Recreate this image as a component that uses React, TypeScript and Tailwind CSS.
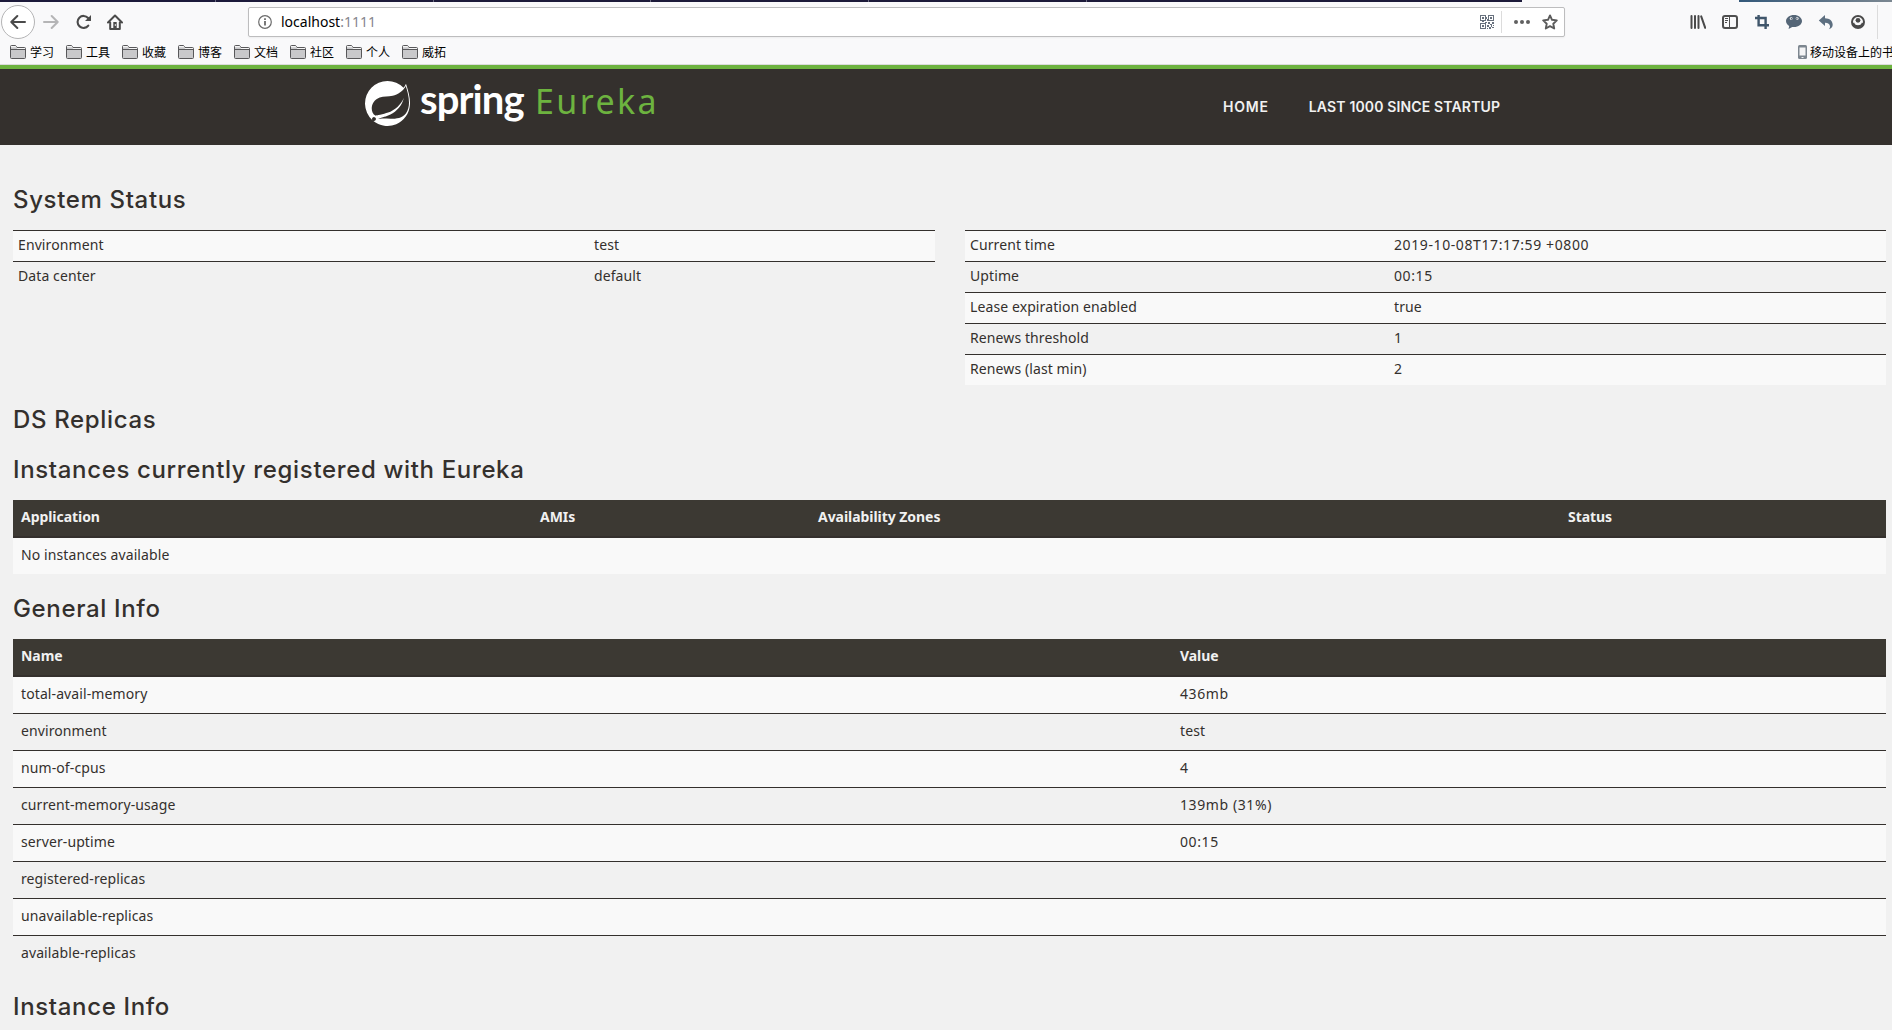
import React from 'react';
import { SiSpring } from 'react-icons/si';

const bookmarks = ['学习', '工具', '收藏', '博客', '文档', '社区', '个人', '威拓'];

const environmentRows = [
  { name: 'Environment', value: 'test' },
  { name: 'Data center', value: 'default' },
];

const runtimeRows = [
  { name: 'Current time', value: '2019-10-08T17:17:59 +0800' },
  { name: 'Uptime', value: '00:15' },
  { name: 'Lease expiration enabled', value: 'true' },
  { name: 'Renews threshold', value: '1' },
  { name: 'Renews (last min)', value: '2' },
];

const generalInfo = [
  { name: 'total-avail-memory', value: '436mb' },
  { name: 'environment', value: 'test' },
  { name: 'num-of-cpus', value: '4' },
  { name: 'current-memory-usage', value: '139mb (31%)' },
  { name: 'server-uptime', value: '00:15' },
  { name: 'registered-replicas', value: '' },
  { name: 'unavailable-replicas', value: '' },
  { name: 'available-replicas', value: '' },
];

const BackIcon = () => (
  <svg className="size-4" viewBox="0 0 16 16" fill="none" stroke="#4a4a4a" strokeWidth="2" strokeLinecap="round" strokeLinejoin="round">
    <path d="M15 8H1.5M7.3 2 1.3 8l6 6" />
  </svg>
);

const ForwardIcon = () => (
  <svg className="size-4" viewBox="0 0 16 16" fill="none" stroke="#b5b5b6" strokeWidth="2" strokeLinecap="round" strokeLinejoin="round">
    <path d="M1 8h13.5M8.7 2l6 6-6 6" />
  </svg>
);

const ReloadIcon = () => (
  <svg className="size-4" viewBox="0 0 16 16" fill="none" stroke="#4a4a4a" strokeWidth="2.1" strokeLinecap="round">
    <path d="M12.3 11.6A6 6 0 1 1 12.1 4" />
    <path d="M15 1v5.4a.6.6 0 0 1-.6.6H9z" fill="#4a4a4a" stroke="none" />
  </svg>
);

const HomeIcon = () => (
  <svg className="size-4" viewBox="0 0 16 16" fill="none" stroke="#4a4a4a" strokeWidth="2" strokeLinecap="round" strokeLinejoin="round">
    <path d="M1 8.5 8 1.5l7 7M3.2 8.5V15h9.6V8.5" />
    <path d="M6.3 8h3.4v6H6.3z" fill="#4a4a4a" stroke="none" />
    <path d="M8.3 10.5v1" stroke="#f9f9fa" strokeWidth="1" />
  </svg>
);

const InfoIcon = () => (
  <svg className="size-[14px]" viewBox="0 0 14 14" fill="none" stroke="#6b6b6b">
    <circle cx="7" cy="7" r="6.3" strokeWidth="1.2" />
    <path d="M7 6v4.5M7 3.2v1.7" strokeWidth="1.8" />
  </svg>
);

const QrIcon = () => (
  <svg className="size-[14px]" viewBox="0 0 14 14" fill="#68717e">
    <path fillRule="evenodd" d="M0 0h6v6H0zM1 1v4h4V1zM8 0h6v6H8zM9 1v4h4V1zM0 8h6v6H0zM1 9v4h4V9z" />
    <path d="M2 2h2v2H2zM10 2h2v2h-2zM2 10h2v2H2zM6 2h1v2H6zM7 4h1v2H7zM2 6h2v1H2zM5 7h2v1H5zM8 7h2v2H8zM10 9h2v1h-2zM12 7h2v2h-2zM7 10h2v2H7zM9 12h2v2H9zM11 10h1v2h-1zM12 12h2v1h-2zM7 13h1v1H7zM13 10h1v1h-1z" />
  </svg>
);

const StarIcon = () => (
  <svg className="size-4" viewBox="0 0 16 16" fill="none" stroke="#5b5b5b" strokeWidth="1.9" strokeLinejoin="round">
    <path d="m8 1.4 2 4.4 4.8.6-3.5 3.3.9 4.8L8 12.2l-4.2 2.3.9-4.8L1.2 6.4 6 5.8z" />
  </svg>
);

const LibraryIcon = () => (
  <svg className="size-4" viewBox="0 0 16 16" fill="none" stroke="#4a4a4a" strokeWidth="2" strokeLinecap="round">
    <path d="M1.5 2v12M5 2v12M8.5 2v12M11.200 2.400l4 11.400" />
  </svg>
);

const SidebarIcon = () => (
  <svg className="size-4" viewBox="0 0 16 16" fill="none" stroke="#4f4f4f">
    <rect x="1" y="2" width="14" height="12" rx="2" strokeWidth="2" />
    <path d="M7.5 2v12M3 4.5h3M3 6.5h3M3 8.5h2" strokeWidth="1" />
  </svg>
);

const CropIcon = () => (
  <svg className="size-4" viewBox="0 0 16 16" fill="none" stroke="#40566b" strokeWidth="2.400">
    <path d="M1 4h10.600v11M4.600 1v10.200H15" />
  </svg>
);

const ChatIcon = () => (
  <svg className="size-4" viewBox="0 0 16 16">
    <path d="M8 1C3.6 1 0 3.6 0 7.1c0 2.1 1.3 3.8 3.2 4.8L2.6 15l3.6-2.1c.6.1 1.2.2 1.8.2 4.4 0 8-2.6 8-6S12.4 1 8 1z" fill="#556677" />
    <circle cx="5.2" cy="4.6" r="1.4" fill="#f9f9fa" />
    <circle cx="11.2" cy="4.6" r="1.4" fill="#f9f9fa" />
    <circle cx="5.5" cy="4.7" r=".8" fill="#4c5c6c" />
    <circle cx="10.9" cy="4.7" r=".8" fill="#4c5c6c" />
  </svg>
);

const UndoIcon = () => (
  <svg className="size-4" viewBox="0 0 16 16" fill="#5d6f80">
    <path d="M7 1v3.200c4.600.1 7.700 2.700 7.700 6.600 0 2.200-1.300 3.700-3.900 4.400 1-1 1.300-1.900 1.200-3-.2-2.200-1.900-3.400-5-3.400V12L.8 6.400z" />
  </svg>
);

const AccountIcon = () => (
  <svg className="size-[14px]" viewBox="0 0 14 14" fill="none">
    <circle cx="7" cy="7" r="6" stroke="#4a4a4a" strokeWidth="2" />
    <circle cx="7" cy="5.3" r="2.400" fill="#4a4a4a" />
    <path d="M1.500 8.500 3 7.500l2 2.200h4l2-2.200 1.500 1L11 12H3z" fill="#4a4a4a" />
    <path d="M3.800 7.800a3.500 3.200 0 0 0 6.400 0" stroke="#f9f9fa" strokeWidth="1.200" />
  </svg>
);

const FolderIcon = () => (
  <svg className="h-[14px] w-4" viewBox="0 0 16 14" fill="#c9c9cb" stroke="#58585a">
    <path d="M.5 12.5v-11a1 1 0 0 1 1-1h4l1.500 2h7.500a1 1 0 0 1 1 1v9a1 1 0 0 1-1 1h-13a1 1 0 0 1-1-1z" />
    <path d="M1 2.200h5.500L7 4h8V3H7L5.500 1H1z" fill="#f5f5f5" stroke="none" />
    <path d="M.5 4.500h15" />
  </svg>
);

const PhoneIcon = () => (
  <svg className="h-[14px] w-[9px]" viewBox="0 0 9 14">
    <rect width="9" height="14" rx="1.500" fill="#7d868f" />
    <path d="M1.500 2.500h6v8h-6z" fill="#f4f4f5" />
    <path d="M3.500 12h2v1h-2z" fill="#f4f4f5" />
  </svg>
);

const BrowserChrome = () => (
  <div className="h-[65px] overflow-hidden border-b border-[#dcdcdc] bg-[#f9f9fa]">
    <div className="flex h-[2px] justify-between">
      <div className="flex w-[1522px] bg-[#1c1a3a]">
        <div className="w-[216px] border-r border-[#6a6a80]" />
        <div className="w-[218px] border-r border-[#6a6a80]" />
        <div className="w-[217px] border-r border-[#6a6a80]" />
        <div className="w-[218px] border-r border-[#6a6a80]" />
        <div className="w-[218px] border-r border-[#6a6a80]" />
      </div>
      <div className="w-[153px] bg-linear-to-r from-[#34597a] to-[#7b8791]" />
    </div>

    <div className="flex h-10 items-center pl-px">
      <div className="flex size-[34px] items-center justify-center rounded-full border border-[#b4b4b5] bg-white">
        <BackIcon />
      </div>
      <div className="ml-2"><ForwardIcon /></div>
      <div className="ml-[17px]"><ReloadIcon /></div>
      <div className="ml-[15px]"><HomeIcon /></div>

      <div className="ml-[125px] flex h-[30px] w-[1317px] items-center rounded-[2px] border border-[#bdbdbe] bg-white pl-[9px] shadow-xs">
        <InfoIcon />
        <div className="ml-[9px] flex-1 font-['Noto_Sans',sans-serif] text-[14px] leading-5 tracking-normal text-black">
          localhost<span className="text-[#85858d]">:1111</span>
        </div>
        <QrIcon />
        <div className="ml-[7px] h-[22px] w-px bg-[#dcdcdc]" />
        <div className="ml-3 flex gap-[2px]">
          <i className="size-1 rounded-full bg-[#606060]" />
          <i className="size-1 rounded-full bg-[#606060]" />
          <i className="size-1 rounded-full bg-[#606060]" />
        </div>
        <div className="mr-[6px] ml-3"><StarIcon /></div>
      </div>

      <div className="ml-[125px] flex gap-4">
        <LibraryIcon />
        <SidebarIcon />
        <CropIcon />
        <ChatIcon />
        <UndoIcon />
      </div>
      <div className="ml-[17px]"><AccountIcon /></div>
      <div className="ml-3 h-[34px] w-px bg-[#dcdcdc]" />
    </div>

    <div className="flex h-5 items-center pl-[10px] font-['Noto_Sans_CJK_SC',sans-serif] text-[12px] leading-5 tracking-normal text-black">
      {bookmarks.map((name) => (
        <div key={name} className="flex w-14 shrink-0 items-center gap-1">
          <FolderIcon />
          <span>{name}</span>
        </div>
      ))}
      <div className="ml-auto flex w-[94px] shrink-0 items-center gap-[3px] whitespace-nowrap">
        <span className="shrink-0"><PhoneIcon /></span>
        <span>移动设备上的书</span>
      </div>
    </div>
  </div>
);

const NavBar = () => (
  <header className="flex h-20 items-start border-t-4 border-[#6db33f] bg-[#34302d] pl-[365px]">
    <div className="flex h-[70px] items-start">
      <SiSpring className="mt-3 size-[45px] text-white" />
      <span className="mt-[5px] ml-[10px] w-[117px] font-['Lato',sans-serif] text-[40px] leading-[50px] font-bold tracking-[-0.9px] text-white">
        spring
      </span>
      <span className="mt-[7px] -ml-[2px] font-['Noto_Sans',sans-serif] text-[34px] leading-[50px] tracking-[2.4px] text-[#6db33f]">
        Eureka
      </span>
    </div>
    <nav className="ml-auto flex w-[669px] gap-[40px] pt-7 font-['Inter',sans-serif] text-[14px] leading-5 font-semibold text-[#f1f1f1]">
      <a className="tracking-[0.8px]">HOME</a>
      <a className="tracking-[0.15px]">LAST 1000 SINCE STARTUP</a>
    </nav>
  </header>
);

const Heading = ({ children, className = 'mt-[22px]' }: { children: React.ReactNode; className?: string }) => (
  <h1 className={`${className} h-[26px] font-['Inter',sans-serif] text-[24px] leading-[26px] font-medium tracking-[0.65px]`}>
    {children}
  </h1>
);

// figures are set a little wider than words
const valueTracking = (value: string) => (/\d/.test(value) ? 'tracking-[0.6px]' : '');

const StatusTable = ({ rows, firstCol }: { rows: { name: string; value: string }[]; firstCol: string }) => (
  <table className="w-full table-fixed border-separate border-spacing-0">
    <tbody>
      {rows.map((row) => (
        <tr key={row.name} className="odd:bg-[#f9f9f9]">
          <td className={`${firstCol} border-t border-[#34302d] px-[5px] pt-1 pb-[6px]`}>{row.name}</td>
          <td className={`border-t border-[#34302d] px-[5px] pt-1 pb-[6px] ${valueTracking(row.value)}`}>{row.value}</td>
        </tr>
      ))}
    </tbody>
  </table>
);

const headCell = 'h-[38px] border-b-2 border-[#34302d] px-2 pb-[3px] text-left font-bold tracking-[-0.05px]';
const bodyCell = 'px-2 pt-[7px] pb-[9px]';

const App: React.FC = () => {
  return (
    <div className="h-[1030px] w-[1892px] overflow-hidden bg-[#f1f1f1] font-['Noto_Sans',sans-serif] text-[14px] leading-5 tracking-[0.1px] text-[#34302d]">
      <BrowserChrome />
      <NavBar />

      <main className="pr-[6px] pl-[13px]">
        <Heading className="mt-[42px]">System Status</Heading>
        <div className="mt-[17px] grid grid-cols-[922px_921px] items-start gap-[30px]">
          <StatusTable rows={environmentRows} firstCol="w-[576px]" />
          <StatusTable rows={runtimeRows} firstCol="w-[424px]" />
        </div>

        <Heading>DS Replicas</Heading>
        <Heading className="mt-6">Instances currently registered with Eureka</Heading>
        <table className="mt-[17px] w-full table-fixed border-separate border-spacing-0">
          <thead>
            <tr className="bg-[#3c3933] text-[#f1f1f1]">
              <th className={`${headCell} w-[519px]`}>Application</th>
              <th className={`${headCell} w-[278px]`}>AMIs</th>
              <th className={`${headCell} w-[750px]`}>Availability Zones</th>
              <th className={headCell}>Status</th>
            </tr>
          </thead>
          <tbody>
            <tr className="bg-[#f9f9f9]">
              <td colSpan={4} className={bodyCell}>No instances available</td>
            </tr>
          </tbody>
        </table>

        <Heading>General Info</Heading>
        <table className="mt-[17px] w-full table-fixed border-separate border-spacing-0">
          <thead>
            <tr className="bg-[#3c3933] text-[#f1f1f1]">
              <th className={`${headCell} w-[1159px]`}>Name</th>
              <th className={headCell}>Value</th>
            </tr>
          </thead>
          <tbody>
            {generalInfo.map((row, i) => (
              <tr key={row.name} className="odd:bg-[#f9f9f9]">
                <td className={`${bodyCell} ${i > 0 ? 'border-t border-[#34302d]' : ''}`}>{row.name}</td>
                <td className={`${bodyCell} ${i > 0 ? 'border-t border-[#34302d]' : ''} ${valueTracking(row.value)}`}>
                  {row.value}
                </td>
              </tr>
            ))}
          </tbody>
        </table>

        <Heading>Instance Info</Heading>
      </main>
    </div>
  );
};

export default App;
